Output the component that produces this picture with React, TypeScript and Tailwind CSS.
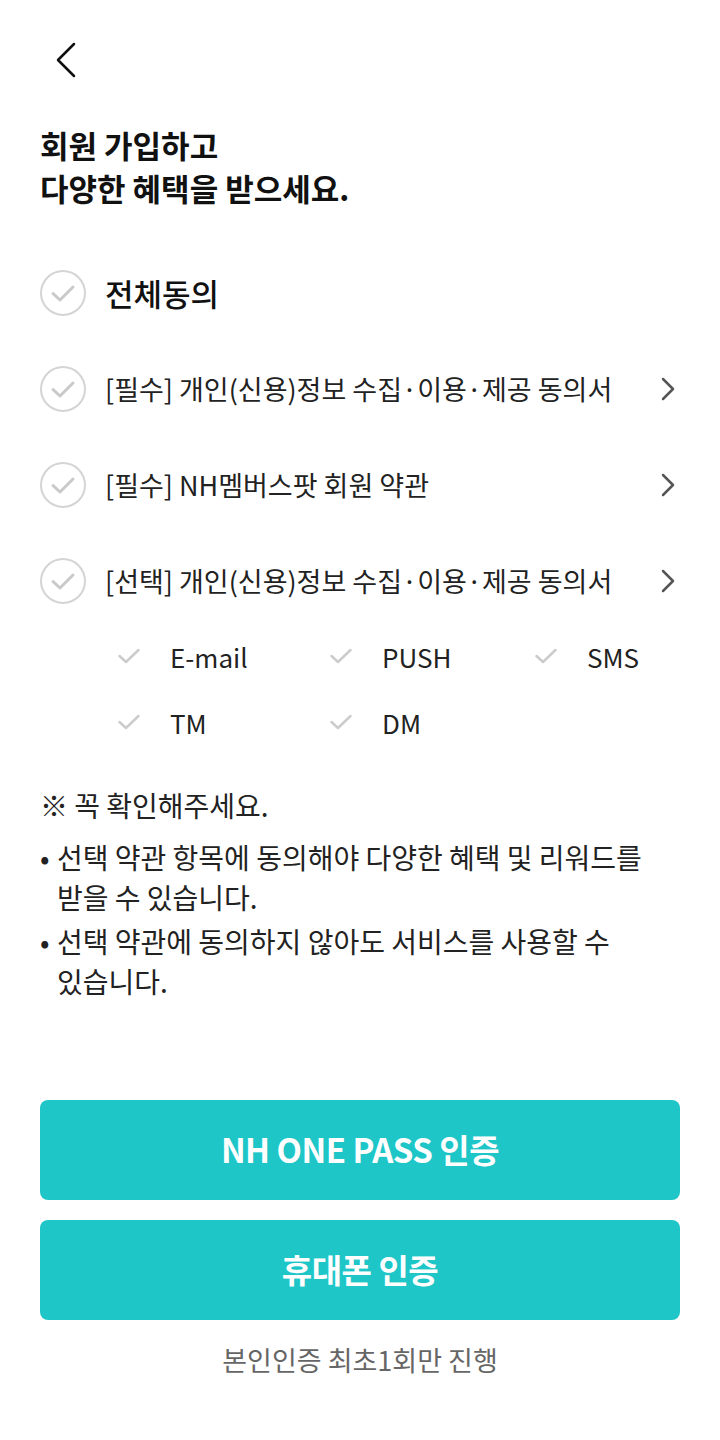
const FONT = { fontFamily: '"Noto Sans CJK KR", "Noto Sans", sans-serif' };

function CircleCheck() {
  return (
    <svg width="46" height="46" viewBox="0 0 46 46" className="shrink-0">
      <circle cx="23" cy="23" r="22" fill="none" stroke="#d4d4d4" strokeWidth="2" />
      <path d="M13 23.5 L20 30 L33 17" fill="none" stroke="#c9c9c9" strokeWidth="3" strokeLinecap="round" strokeLinejoin="round" />
    </svg>
  );
}

function SmallCheck() {
  return (
    <svg width="22" height="16" viewBox="0 0 22 16" className="shrink-0">
      <path d="M1.5 8 L8 14 L20.5 2" fill="none" stroke="#cccccc" strokeWidth="2.5" strokeLinecap="round" strokeLinejoin="round" />
    </svg>
  );
}

function ChevronRight() {
  return (
    <svg width="16" height="24" viewBox="0 0 16 24" className="mr-1 shrink-0">
      <path d="M3 2 L13 12 L3 22" fill="none" stroke="#555" strokeWidth="2.5" strokeLinecap="round" strokeLinejoin="round" />
    </svg>
  );
}

const terms = [
  "[필수] 개인(신용)정보 수집·이용·제공 동의서",
  "[필수] NH멤버스팟 회원 약관",
  "[선택] 개인(신용)정보 수집·이용·제공 동의서",
];

const channels = ["E-mail", "PUSH", "SMS", "TM", "DM"];

export default function App() {
  return (
    <div className="min-h-[1440px] bg-white px-10 text-[#111]" style={FONT}>
      <div className="h-[120px] pt-[42px] pl-[14px]">
        <svg width="24" height="36" viewBox="0 0 24 36">
          <path d="M20 2 L4 18 L20 34" fill="none" stroke="#111" strokeWidth="2.5" strokeLinecap="round" strokeLinejoin="round" />
        </svg>
      </div>

      <h1 className="mt-[3px] text-[31px] font-bold leading-[43px]">
        회원 가입하고
        <br />
        다양한 혜택을 받으세요.
      </h1>

      <div className="mt-[36px]">
        <div className="flex h-24 items-center gap-[19px]">
          <CircleCheck />
          <span className="text-[31px] font-medium">전체동의</span>
        </div>
        {terms.map((t) => (
          <div key={t} className="flex h-24 items-center gap-[19px]">
            <CircleCheck />
            <span className="flex-1 text-[27px] text-[#222]">{t}</span>
            <ChevronRight />
          </div>
        ))}
      </div>

      <div className="-mt-[6px] grid grid-cols-[212px_205px_1fr] pl-[78px]">
        {channels.map((c) => (
          <div key={c} className="flex h-[66px] items-center gap-[30px]">
            <SmallCheck />
            <span className="text-[26px] text-[#222]">{c}</span>
          </div>
        ))}
      </div>

      <div className="mt-[30px] text-[28px] text-[#222] break-keep">
        <p className="mb-3 leading-[40px]">※ 꼭 확인해주세요.</p>
        <ul>
          <li className="flex leading-[40px]">
            <span className="w-[17px] shrink-0">•</span>
            <span>선택 약관 항목에 동의해야 다양한 혜택 및 리워드를 받을 수 있습니다.</span>
          </li>
          <li className="mt-1 flex leading-[40px]">
            <span className="w-[17px] shrink-0">•</span>
            <span>선택 약관에 동의하지 않아도 서비스를 사용할 수 있습니다.</span>
          </li>
        </ul>
      </div>

      <div className="mt-[99px] flex flex-col gap-5">
        <button className="h-[100px] rounded-lg bg-[#1fc6c8] text-[33px] font-bold tracking-[-0.5px] text-white">
          NH ONE PASS 인증
        </button>
        <button className="h-[100px] rounded-lg bg-[#1fc6c8] text-[33px] font-bold tracking-[-0.5px] text-white">
          휴대폰 인증
        </button>
      </div>

      <p className="mt-5 text-center text-[27px] leading-[40px] text-[#666]">
        본인인증 최초1회만 진행
      </p>
    </div>
  );
}
